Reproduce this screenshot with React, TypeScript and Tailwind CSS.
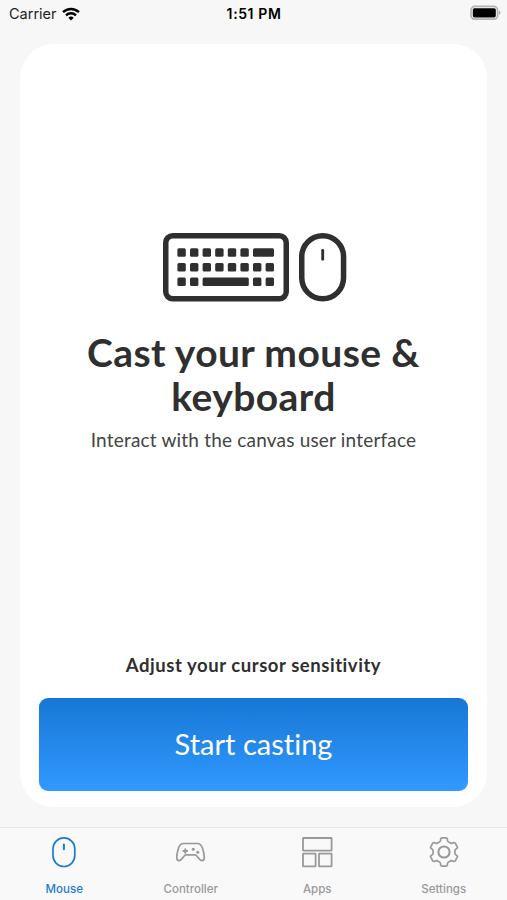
import React from 'react';

const keyRows = [
  { y: 15.3, keys: [[14.4, 8.4], [27, 8.4], [39.6, 8.4], [52.2, 8.4], [64.8, 8.4], [77.4, 8.4], [90, 21]] },
  { y: 30, keys: [[14.4, 8.4], [27, 8.4], [39.6, 8.4], [52.2, 8.4], [64.8, 8.4], [77.4, 8.4], [90, 8.4], [102.6, 8.4]] },
  { y: 44.6, keys: [[14.4, 8.4], [27, 8.4], [39.6, 46.2], [90, 8.4], [102.6, 8.4]] },
];

const KeyboardIcon = () => (
  <svg width="126" height="69" viewBox="0 0 126 69" fill="none">
    <rect x="2.75" y="2.75" width="120.5" height="63" rx="7" stroke="#2f2f2f" strokeWidth="5.5" />
    {keyRows.map((row) =>
      row.keys.map(([x, width]) => (
        <rect key={`${row.y}-${x}`} x={x} y={row.y} width={width} height="8.5" rx="1.5" fill="#2f2f2f" />
      ))
    )}
  </svg>
);

const LargeMouseIcon = () => (
  <svg width="48" height="69" viewBox="0 0 48 69" fill="none" stroke="#2f2f2f">
    <rect x="2.75" y="2.75" width="41.8" height="63" rx="20.9" strokeWidth="5.5" />
    <path d="M23.7 17.3v9" strokeWidth="2.8" strokeLinecap="round" />
  </svg>
);

const WifiIcon = () => (
  <svg width="18" height="14" viewBox="0 0 18 14" fill="none" stroke="#000" strokeWidth="2.4">
    <path d="M1 5.2a11.6 11.6 0 0 1 16 0" />
    <path d="M4 8.3a7.2 7.2 0 0 1 10 0" />
    <path d="M6.3 10.8a3.9 3.9 0 0 1 5.4 0L9 13.5z" fill="#000" stroke="none" />
  </svg>
);

const BatteryIcon = () => (
  <svg width="31" height="15" viewBox="0 0 31 15" fill="none">
    <rect x="1" y="1.4" width="26.6" height="12.8" rx="3.8" stroke="#b3b3b3" strokeWidth="1.7" />
    <rect x="2.8" y="3.2" width="23" height="9.2" rx="1.6" fill="#000" />
    <path d="M29 5.6c1.9.8 1.9 3.6 0 4.4z" fill="#aaa" />
  </svg>
);

const MouseIcon = () => (
  <svg width="30" height="31" viewBox="0 0 30 31" fill="none" stroke="currentColor" strokeWidth="1.7">
    <rect x="4" y="0.9" width="21.8" height="28.6" rx="10.9" />
    <path d="M14.9 7.4v4.8" strokeWidth="2" strokeLinecap="round" />
  </svg>
);

const ControllerIcon = () => (
  <svg width="30" height="30" viewBox="0 0 30 30" fill="none" stroke="currentColor" strokeWidth="1.7" strokeLinejoin="round" strokeLinecap="round">
    <path d="M7.500 6.500h14c2.700 0 4 1.700 4.800 4.100 1 3 2 6.800 2 10 0 2.200-.9 3.100-2.300 3.100-1.300 0-2.300-.9-3.400-2.400l-1.400-1.900c-.7-1-1.400-1.500-2.700-1.500h-8c-1.300 0-2 .5-2.700 1.500l-1.400 1.900c-1.100 1.500-2.100 2.400-3.400 2.400-1.400 0-2.300-.9-2.300-3.100 0-3.200 1-7 2-10C3.500 8.200 4.800 6.500 7.500 6.500z" />
    <path d="M9.300 12.100v3.800M7.400 14h3.800" strokeWidth="1.900" />
    <circle cx="17.2" cy="12.300" r="1.500" fill="currentColor" stroke="none" />
    <circle cx="21.8" cy="15.2" r="1.500" fill="currentColor" stroke="none" />
  </svg>
);

const AppsIcon = () => (
  <svg width="31" height="31" viewBox="0 0 31 31" fill="none" stroke="currentColor" strokeWidth="1.8" strokeLinejoin="round">
    <rect x="1" y="1" width="28.6" height="12.6" rx="0.4" />
    <rect x="1" y="16.7" width="12.6" height="12.7" rx="0.4" />
    <rect x="17" y="16.7" width="12.6" height="12.7" rx="0.4" />
  </svg>
);

// One tooth and one valley per 60 degrees
const gearPath = () => {
  const point = (r: number, deg: number) => {
    const a = (deg * Math.PI) / 180;
    return `${(15 + r * Math.cos(a)).toFixed(2)} ${(15 + r * Math.sin(a)).toFixed(2)}`;
  };
  let d = '';
  for (let i = 0; i < 6; i++) {
    const t = 30 + i * 60;
    d += `${i === 0 ? 'M' : 'L'}${point(11.9, t - 17)}L${point(13.6, t - 14)}Q${point(14.4, t - 12)} ${point(14.3, t - 8)}`;
    d += `L${point(14.3, t + 8)}Q${point(14.4, t + 12)} ${point(13.6, t + 14)}L${point(11.9, t + 17)}`;
    d += `Q${point(10.7, t + 21)} ${point(11, t + 30)}Q${point(10.7, t + 39)} ${point(11.9, t + 43)}`;
  }
  return d + 'Z';
};

const SettingsIcon = () => (
  <svg width="30" height="30" viewBox="0 0 30 30" fill="none" stroke="currentColor" strokeWidth="1.7" strokeLinejoin="round">
    <path d={gearPath()} />
    <circle cx="15" cy="15" r="5.6" strokeWidth="2" />
  </svg>
);

const tabs = [
  { label: 'Mouse', icon: <MouseIcon />, active: true },
  { label: 'Controller', icon: <ControllerIcon />, active: false },
  { label: 'Apps', icon: <AppsIcon />, active: false },
  { label: 'Settings', icon: <SettingsIcon />, active: false },
];

const App: React.FC = () => {
  return (
    <div className="flex h-[900px] w-[507px] flex-col overflow-hidden bg-[#f7f7f7] font-['Inter',sans-serif]">
      {/* Status Bar */}
      <header className="grid h-[44px] shrink-0 grid-cols-[1fr_auto_1fr] items-start pt-[5px] pr-[6px] pl-[9px] text-black">
        <div className="flex items-center gap-[5px]">
          <span className="text-[14.5px] leading-[18px] text-[#222]">Carrier</span>
          <WifiIcon />
        </div>
        <span className="pr-[2px] text-center text-[14px] leading-[18px] font-semibold tracking-[0.6px]">1:51 PM</span>
        <div className="flex justify-end">
          <BatteryIcon />
        </div>
      </header>

      {/* Main Card */}
      <main className="mx-[20px] flex h-[763px] shrink-0 flex-col items-center rounded-[34px] bg-white px-[19px] pt-[189px] pb-[16px] font-['Lato',sans-serif] text-[#2f2f2f]">
        <div className="flex gap-[10px] pl-[2px]">
          <KeyboardIcon />
          <LargeMouseIcon />
        </div>
        <h1 className="mt-[28px] text-center text-[39px] leading-[44px] font-bold tracking-[0.4px] whitespace-nowrap">
          Cast your mouse &<br />keyboard
        </h1>
        <p className="mt-[9px] text-[19px] leading-[26px] tracking-[0.19px] whitespace-nowrap text-[#444]">
          Interact with the canvas user interface
        </p>
        <p className="mt-auto text-[18.5px] leading-[24px] font-bold tracking-[0.55px] whitespace-nowrap">
          Adjust your cursor sensitivity
        </p>
        <button className="mt-[21px] h-[93px] w-full shrink-0 rounded-[9px] bg-linear-to-b from-[#1677d5] to-[#3199ff] pb-[2px] text-[29px] tracking-[0.01px] text-white">
          Start casting
        </button>
      </main>

      {/* Tab Bar */}
      <nav className="mt-auto grid h-[73px] shrink-0 grid-cols-4 border-t border-[#e8e8e8] bg-[#f9f9f9] pl-px">
        {tabs.map((tab) => (
          <a
            key={tab.label}
            className={`flex flex-col items-center pt-[9px] ${tab.active ? 'text-[#1f7bd2]' : 'text-[#999]'}`}
          >
            <span className="flex h-[31px] items-start">{tab.icon}</span>
            <span className="mt-[14px] text-[11.5px] leading-[14px] font-medium">{tab.label}</span>
          </a>
        ))}
      </nav>
    </div>
  );
};

export default App;
